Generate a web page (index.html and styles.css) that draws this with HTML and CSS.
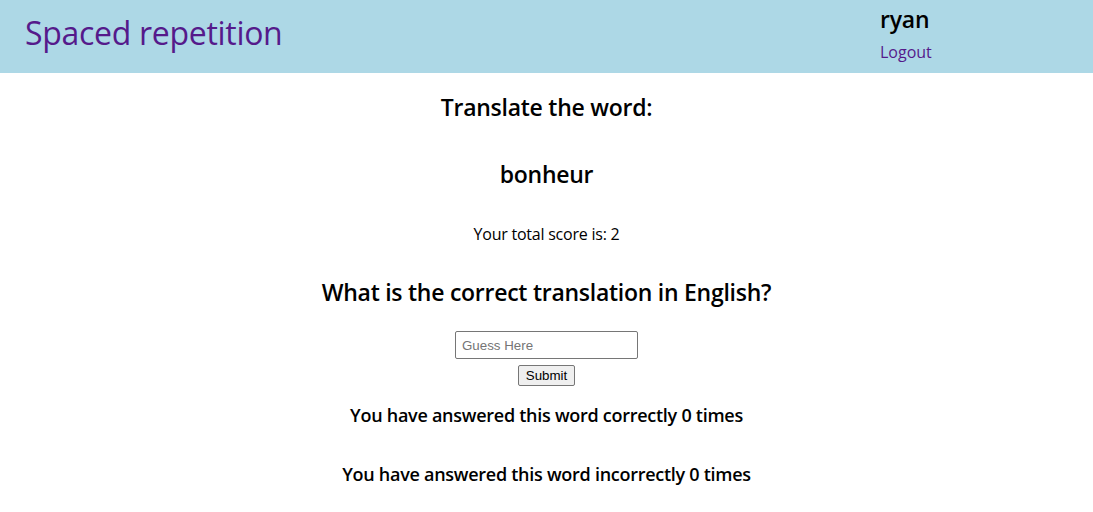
FILE: index.html
```html
<!DOCTYPE html>
<html lang="en">
<head>
<meta charset="utf-8">
<title>Spaced repetition</title>
<link rel="stylesheet" href="styles.css">
</head>
<body>
<header class="site-header">
  <h1 class="brand"><a class="brand-link" href="#">Spaced repetition</a></h1>
  <div class="user-box">
    <span class="user-name">ryan</span>
    <a class="logout" href="#">Logout</a>
  </div>
</header>
<main class="learn">
  <h2 class="prompt">Translate the word:</h2>
  <h2 class="word">bonheur</h2>
  <p class="score">Your total score is: 2</p>
  <h2 class="question">What is the correct translation in English?</h2>
  <form class="guess-form">
    <input class="guess-input" type="text" placeholder="Guess Here">
    <button class="submit-btn" type="submit">Submit</button>
  </form>
  <h3 class="tally tally-first">You have answered this word correctly 0 times</h3>
  <h3 class="tally tally-second">You have answered this word incorrectly 0 times</h3>
</main>
</body>
</html>
```

FILE: styles.css
```css
html, body {
  margin: 0;
  padding: 0;
  background: #ffffff;
}
body {
  font-family: "Open Sans", "Noto Sans", sans-serif;
  color: #000;
}
.site-header {
  height: 73px;
  background: #add8e6;
  display: flex;
  justify-content: space-between;
  align-items: flex-start;
}
.brand {
  margin: 0;
  padding-left: 25px;
  font-size: 32px;
  font-weight: 400;
  line-height: 66px;
  letter-spacing: -0.3px;
}
.brand-link {
  color: #551a8b;
  text-decoration: none;
}
.user-box {
  width: 213px;
  display: flex;
  flex-direction: column;
  align-items: flex-start;
}
.user-name {
  font-size: 23px;
  font-weight: 600;
  line-height: 28px;
  margin-top: 5px;
  letter-spacing: -0.2px;
}
.logout {
  font-size: 16px;
  color: #551a8b;
  text-decoration: none;
  line-height: 18px;
  margin-top: 10px;
}
.learn {
  text-align: center;
  display: flex;
  flex-direction: column;
  align-items: center;
}
.prompt, .word, .question {
  font-size: 23px;
  font-weight: 600;
  line-height: 28px;
  letter-spacing: -0.26px;
  margin: 0;
}
.prompt { margin-top: 20px; }
.word { margin-top: 39px; }
.score {
  font-size: 16px;
  line-height: 18px;
  letter-spacing: -0.23px;
  margin: 37px 0 0;
}
.question { margin-top: 35px; }
.guess-form {
  margin-top: 25px;
  display: flex;
  flex-direction: column;
  align-items: center;
  gap: 6px;
}
.guess-input {
  box-sizing: border-box;
  width: 183px;
  height: 28px;
  border: 1px solid #767676;
  border-radius: 2px;
  padding: 0 6px;
  font-family: "Liberation Sans", Arial, sans-serif;
  font-size: 13.33px;
}
.guess-input::placeholder { color: #757575; }
.submit-btn {
  box-sizing: border-box;
  height: 21px;
  padding: 0 7px;
  font-family: "Liberation Sans", Arial, sans-serif;
  font-size: 13.33px;
  background: #efefef;
  border: 1px solid #767676;
  border-radius: 2px;
  color: #000;
}
.tally {
  font-size: 18px;
  font-weight: 600;
  line-height: 24px;
  letter-spacing: -0.27px;
  margin: 0;
}
.tally-first { margin-top: 17px; }
.tally-second { margin-top: 35px; }
```
